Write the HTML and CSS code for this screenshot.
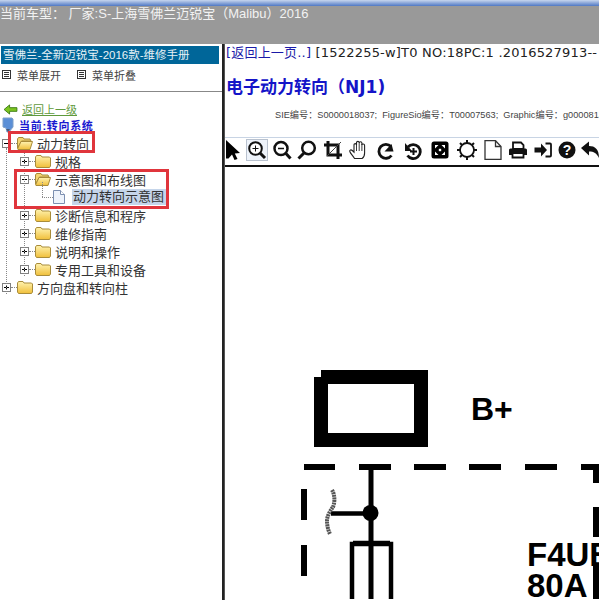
FILE: index.html
```html
<!DOCTYPE html>
<html lang="zh">
<head>
<meta charset="utf-8">
<title>维修手册</title>
<link rel="stylesheet" href="styles.css">
</head>
<body>
<svg class="defs" width="0" height="0" aria-hidden="true">
  <defs>
    <linearGradient id="fg" x1="0" y1="0" x2="0" y2="1"><stop offset="0" stop-color="#fff3b0"/><stop offset="1" stop-color="#f0bf3a"/></linearGradient>
    <symbol id="folder" viewBox="0 0 16 14">
      <path d="M.5 3 1.500 1.500h4.500l1 1.500h7.500l1 1V12l-1 1.500H1.500L.5 12z" fill="url(#fg)" stroke="#a98c3a"/>
    </symbol>
    <symbol id="folderopen" viewBox="0 0 16 14">
      <path d="M.5 3 1.500 1.500h4.500l1 1.500h6l1 2H4.500L.5 12z" fill="#f3d670" stroke="#a58a3a"/>
      <path d="M.5 13 4 5.500h11.500l-2.500 8H1z" fill="url(#fg)" stroke="#a98c3a"/>
    </symbol>
    <symbol id="plus" viewBox="0 0 9 9">
      <rect x=".5" y=".5" width="8" height="8" fill="#fff" stroke="#808080"/><path d="M2 4.500h5M4.500 2v5" stroke="#000"/>
    </symbol>
    <symbol id="minus" viewBox="0 0 9 9">
      <rect x=".5" y=".5" width="8" height="8" fill="#fff" stroke="#808080"/><path d="M2 4.500h5" stroke="#000"/>
    </symbol>
    <symbol id="listicon" viewBox="0 0 9 9">
      <rect x=".5" y=".5" width="8" height="8" fill="#fff" stroke="#333"/><path d="M2 2.500h5M2 4.500h5M2 6.500h5" stroke="#333"/>
    </symbol>
  </defs>
</svg>
<div class="app">
  <header class="topbar">
    <div class="topstrip"></div>
    <div class="toptitle">当前车型： 厂家:S-上海雪佛兰迈锐宝（Malibu）2016</div>
  </header>
  <main class="main">
    <aside class="side">
      <h1 class="sidehead">雪佛兰-全新迈锐宝-2016款-维修手册</h1>
      <div class="menu">
        <span class="menuitem"><svg class="mi"><use href="#listicon"/></svg>菜单展开</span>
        <span class="menuitem"><svg class="mi"><use href="#listicon"/></svg>菜单折叠</span>
      </div>
      <a class="back">
        <svg class="backicon" viewBox="0 0 16 12"><path d="M1 6 7 1v3h8v4H7v3z" fill="#7cc520" stroke="#3a7a10"/></svg>
        <span class="backtext">返回上一级</span>
      </a>
      <div class="current">
        <svg class="curicon" viewBox="0 0 12 16"><path d="M1 1h9l1 1v8l-4 5H5l-1-4-3-1z" fill="#5b8fd6" stroke="#7f9fc8"/><path d="M4 12h4l-2 3z" fill="#4a5a78"/></svg>
        <span>当前:转向系统</span>
      </div>
      <div class="tree">
        <div class="guide guide0"></div>
        <div class="guide guide1"></div>
        <div class="guide guide2"></div>
        <div class="row"><svg class="exp"><use href="#minus"/></svg><i class="dash"></i><svg class="fold"><use href="#folderopen"/></svg><span>动力转向</span></div>
        <div class="row lv1"><svg class="exp"><use href="#plus"/></svg><i class="dash"></i><svg class="fold"><use href="#folder"/></svg><span>规格</span></div>
        <div class="row lv1"><svg class="exp"><use href="#minus"/></svg><i class="dash"></i><svg class="fold"><use href="#folderopen"/></svg><span>示意图和布线图</span></div>
        <div class="row lv2">
          <i class="dash leafdash"></i>
          <svg class="doc" viewBox="0 0 12 14"><path d="M.5.500h7l4 4v9H.5z" fill="#eef3fb" stroke="#7c8fb0"/><path d="M7.500.500v4h4" fill="#fff" stroke="#7c8fb0"/></svg>
          <span class="selected">动力转向示意图</span>
        </div>
        <div class="row lv1"><svg class="exp"><use href="#plus"/></svg><i class="dash"></i><svg class="fold"><use href="#folder"/></svg><span>诊断信息和程序</span></div>
        <div class="row lv1"><svg class="exp"><use href="#plus"/></svg><i class="dash"></i><svg class="fold"><use href="#folder"/></svg><span>维修指南</span></div>
        <div class="row lv1"><svg class="exp"><use href="#plus"/></svg><i class="dash"></i><svg class="fold"><use href="#folder"/></svg><span>说明和操作</span></div>
        <div class="row lv1"><svg class="exp"><use href="#plus"/></svg><i class="dash"></i><svg class="fold"><use href="#folder"/></svg><span>专用工具和设备</span></div>
        <div class="row"><svg class="exp"><use href="#plus"/></svg><i class="dash"></i><svg class="fold"><use href="#folder"/></svg><span>方向盘和转向柱</span></div>
        <div class="redbox redbox1"></div>
        <div class="redbox redbox2"></div>
      </div>
    </aside>
    <div class="divider"></div>
    <section class="content">
      <div class="pageline"><a class="pagelink">[返回上一页..]</a> [1522255-w]T0 NO:18PC:1 .2016527913--</div>
      <h2 class="doctitle">电子动力转向（NJ1)</h2>
      <div class="meta">SIE编号：S0000018037;&nbsp; FigureSio编号：T00007563;&nbsp; Graphic编号：g00008137</div>
      <div class="toolbar">
        <svg class="tool" width="20" viewBox="0 0 20 20"><path d="M1 0 15 13 9.800 13.500 12.500 19l-3 1L7 14.500l-3.500 4L1 18.500z" fill="#000"/></svg>
        <svg class="tool active" width="20" viewBox="0 0 20 20"><circle cx="8.500" cy="8.500" r="6.300" fill="#fff" stroke="#111" stroke-width="2"/><path d="M13 13l5 5" stroke="#111" stroke-width="3"/><path d="M5.500 8.500h6M8.500 5.500v6" stroke="#111"/></svg>
        <svg class="tool" width="26" viewBox="0 0 20 20"><circle cx="9" cy="8.500" r="6.500" fill="none" stroke="#111" stroke-width="2.500"/><path d="M13.500 13l5 5.500" stroke="#111" stroke-width="3"/><path d="M6 8.500h6" stroke="#111" stroke-width="1.500"/></svg>
        <svg class="tool" width="24" viewBox="0 0 20 20"><circle cx="11.500" cy="8" r="6.300" fill="none" stroke="#111" stroke-width="2.500"/><path d="M7 13 1.500 18.500" stroke="#111" stroke-width="3"/></svg>
        <svg class="tool" width="28" viewBox="0 0 20 20"><path d="M5 1v14h14" fill="none" stroke="#111" stroke-width="3"/><path d="M1 5h14v14" fill="none" stroke="#111" stroke-width="3"/><path d="M4 16 18 2" stroke="#444"/></svg>
        <svg class="tool" width="24" viewBox="0 0 20 20"><path d="M5.500 18.500C4 16 1.500 13.500.8 11.500c-.4-1.800 1.400-2 2.500-1l1.700 1.700V5c0-1.800 2.500-1.800 2.500 0V2.700c0-1.800 2.700-1.800 2.700 0V3c0-1.600 2.700-1.600 2.700 0v2c0-1.500 2.700-1.500 2.700.5V13c0 2.500-1 4.500-2.500 5.500z" fill="#fff" stroke="#222" stroke-width="1.100"/><path d="M7.500 5v6M10.200 3v8M12.900 4v7" stroke="#222" stroke-width=".9"/></svg>
        <svg class="tool tool-low" width="30" viewBox="0 0 20 20"><path d="M15.500 14.500a7 7 0 1 1-.5-9" fill="none" stroke="#111" stroke-width="2.800"/><path d="M8.500 10.500h9L15.500 3z" fill="#111"/></svg>
        <svg class="tool tool-low" width="24" viewBox="0 0 20 20"><path d="M5 6a7 7 0 1 1-.5 8.500" fill="none" stroke="#111" stroke-width="2.800"/><path d="M2 2v8h7z" fill="#111"/><path d="M7 10.500h7M10.500 7v7" stroke="#111" stroke-width="2"/></svg>
        <svg class="tool" width="30" viewBox="0 0 20 20"><rect x="1.500" y="1.500" width="17" height="17" rx="2.500" fill="#000"/><path d="M5 5h3.500L5 8.500zM15 5v3.500L11.500 5zM5 15v-3.500L8.500 15zM15 15h-3.500L15 11.500z" fill="#fff"/><rect x="8.800" y="8.800" width="2.400" height="2.400" fill="#fff"/></svg>
        <svg class="tool" width="24" viewBox="0 0 20 20"><circle cx="10" cy="10" r="7" fill="#fff" stroke="#111" stroke-width="1.800"/><path d="M10 0v3M10 17v3M0 10h3M17 10h3M3 3l2 2M15 15l2 2M3 17l2-2M15 5l2-2" stroke="#111" stroke-width="2"/></svg>
        <svg class="tool" width="28" viewBox="0 0 20 20"><path d="M2 .7h10.500L18 6.500v13H2z" fill="#fff" stroke="#333" stroke-width="1.300"/><path d="M12.500.7v5.800H18" fill="none" stroke="#333" stroke-width="1.300"/></svg>
        <svg class="tool" width="22" viewBox="0 0 20 20"><path d="M5 2.500h8l2.500 2.500v4H5z" fill="#fff" stroke="#111" stroke-width="1.800"/><path d="M2.500 8.500h15a1.500 1.500 0 0 1 1.500 1.500v5H1v-5a1.500 1.500 0 0 1 1.500-1.500z" fill="#111"/><path d="M4.500 13h11v4.500h-11z" fill="#fff" stroke="#111" stroke-width="1.800"/></svg>
        <svg class="tool" width="28" viewBox="0 0 20 20"><path d="M1.500 7.500H8V3.500l6 6.500-6 6.500v-4H1.500z" fill="#111"/><path d="M12.500 3.500h4.500a1 1 0 0 1 1 1v11a1 1 0 0 1-1 1h-4.500" fill="none" stroke="#111" stroke-width="1.800"/></svg>
        <svg class="tool" width="20" viewBox="0 0 20 20"><circle cx="10" cy="10" r="8.500" fill="#111"/><text x="10" y="15" class="helpmark">?</text></svg>
        <svg class="tool" width="26" viewBox="0 0 20 20"><path d="M1 8 9 1.500v4.500c6 0 10 3 10 12-2.500-5-5-6.500-10-6.500v4z" fill="#111"/></svg>
      </div>
      <svg class="diagram" width="374" height="432" viewBox="225 168 374 432">
        <path d="M321 371h107v77H314V378h7zM328 385v49h86v-49z" fill="#000" fill-rule="evenodd"/>
        <text x="471" y="421" class="dtext">B+</text>
        <path d="M304 468h31M359 468h32M414 468h32M469 468h32M525 468h32M581 468h15v16M596 508v30M596 567v33" fill="none" stroke="#000" stroke-width="6"/>
        <path d="M304 490v31M304 546v31" stroke="#000" stroke-width="6"/>
        <path d="M371 468v132" stroke="#000" stroke-width="5"/>
        <path d="M331 514.500h40" stroke="#000" stroke-width="4.500"/>
        <circle cx="370.500" cy="514" r="8" fill="#000"/>
        <path d="M332 491c3 5 3 12 1 17-3 4-6 9-6 14 0 4 1 9 3 13" fill="none" stroke="#555" stroke-width="4" stroke-dasharray="2 .6"/>
        <path d="M352 600v-55h39v55M353 544h37" fill="none" stroke="#000" stroke-width="4.500"/>
        <text x="527" y="567" class="dtext large">F4UE</text>
        <text x="527" y="598" class="dtext large">80A</text>
      </svg>
    </section>
  </main>
</div>
</body>
</html>
```
FILE: styles.css
```css
* { box-sizing: border-box; }
html, body { margin: 0; height: 100%; overflow: hidden; background: #fff; }
body { font-family: "Liberation Sans", "Noto Sans CJK SC", sans-serif; }
.defs { display: block; height: 0; }
.app { display: flex; flex-direction: column; height: 600px; width: 599px; overflow: hidden; }

.topbar { height: 44px; background: #999; flex: none; overflow: hidden; }
.topstrip { height: 6px; background: linear-gradient(#c7d6ee, #4f78c4); }
.toptitle { color: #f2f2f2; font-size: 13px; line-height: 16px; letter-spacing: 0; white-space: nowrap; }

.main { display: flex; flex: 1; min-height: 0; }
.side { width: 222px; flex: none; padding-top: 2px; background: #fff; color: #333; }
.sidehead { margin: 0 3px 0 1px; height: 18px; background: #006699; color: #e8f2f6; font-size: 11.500px; font-weight: 400; line-height: 18px; padding-left: 2px; white-space: nowrap; }
.menu { display: flex; height: 28px; align-items: center; gap: 15px; padding: 0 0 6px 1px; border-bottom: 1px solid #888; font-size: 11px; color: #444; }
.menuitem { display: flex; align-items: center; gap: 6px; height: 22px; }
.mi { width: 9px; height: 9px; margin-left: 1px; }
.back { display: flex; align-items: center; height: 16px; margin-top: 9px; padding-left: 3px; gap: 4px; }
.backicon { width: 15px; height: 11px; }
.backtext { font-size: 11px; color: #5f9a3c; text-decoration: underline; }
.current { display: flex; align-items: center; height: 16px; padding-left: 2px; gap: 5px; font-size: 11px; font-weight: 700; color: #1a1ad0; letter-spacing: .7px; }
.curicon { width: 12px; height: 16px; }

.tree { position: relative; margin-top: 1px; font-size: 13px; color: #333; }
.row { display: flex; align-items: center; height: 18px; padding-left: 2px; white-space: nowrap; }
.lv1 { padding-left: 20px; }
.lv2 { padding-left: 42px; }
.exp { width: 9px; height: 9px; flex: none; }
.dash { width: 6px; flex: none; border-top: 1px dotted #888; }
.fold { width: 16px; height: 14px; flex: none; }
.row .fold + span { margin-left: 4px; }
.leafdash { width: 11px; }
.doc { width: 12px; height: 14px; flex: none; }
.selected { margin-left: 7px; padding: 0 2px 0 1px; background: #c5d5ea; line-height: 16px; color: #333; }

.guide { position: absolute; border-left: 1px dotted #888; }
.guide0 { left: 6px; top: 14px; height: 146px; }
.guide1 { left: 24px; top: 16px; height: 126px; }
.guide2 { left: 42px; top: 48px; height: 15px; }
.redbox { position: absolute; border: 3px solid #e0353c; pointer-events: none; }
.redbox1 { left: 8px; top: -3px; width: 87px; height: 22px; }
.redbox2 { left: 14px; top: 35px; width: 155px; height: 40px; }

.divider { width: 3px; flex: none; background: #222; border-right: 1px solid #555; }
.content { flex: 1; min-width: 0; overflow: hidden; background: #fff; }
.pageline { height: 17px; padding-left: 1px; font-family: "DejaVu Sans", "Noto Sans CJK SC", sans-serif; font-size: 13px; line-height: 17px; letter-spacing: .2px; color: #222; white-space: nowrap; }
.pagelink { color: #1a1aa8; }
.doctitle { margin: 16px 0 0; height: 20px; padding-left: 1px; font-family: "DejaVu Sans", "Noto Sans CJK SC", sans-serif; font-size: 17px; line-height: 20px; font-weight: 700; color: #1414c8; white-space: nowrap; }
.meta { margin-top: 11px; height: 14px; padding-left: 50px; font-size: 9.200px; line-height: 14px; color: #444; white-space: nowrap; }
.toolbar { display: flex; margin-top: 15px; height: 30px; align-items: center; padding-bottom: 4px; border-top: 1px solid #c8d4e4; border-bottom: 2px solid #111; background: #fff; overflow: hidden; }
.tool { height: 20px; flex: none; }
.tool-low { margin-top: 3px; }
.active { margin: 0 2px; background: #eef3fa; outline: 1px solid #b9c2cf; outline-offset: 0; }
.helpmark { font: 700 14px "Liberation Sans", sans-serif; fill: #fff; text-anchor: middle; }
.diagram { display: block; }
.dtext { font: 700 32px "Liberation Sans", sans-serif; fill: #000; }
.large { font-size: 33px; }
```
